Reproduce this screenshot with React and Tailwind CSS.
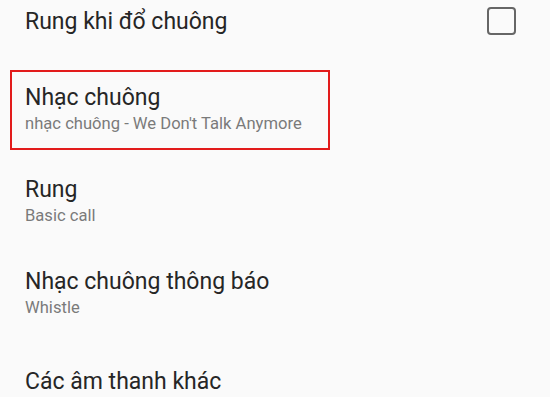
import React from "react";

const rows = [
  { title: "Nhạc chuông", sub: "nhạc chuông - We Don't Talk Anymore", marked: true },
  { title: "Rung", sub: "Basic call" },
  { title: "Nhạc chuông thông báo", sub: "Whistle" },
];

const Row = ({ title, sub, marked }) => (
  <div
    className={`ml-[10px] w-[320px] border-2 pl-[13px] pt-[11px] pb-[13px] ${
      marked ? "border-[#e21b1b]" : "border-transparent"
    }`}
  >
    <div className="text-[23px] leading-[30px] text-[#262626]">{title}</div>
    <div className="text-[16.6px] leading-[22px] text-[#7a7a7a]">{sub}</div>
  </div>
);

export default function App() {
  return (
    <div
      className="h-[397px] w-[550px] overflow-hidden bg-[#fafafa]"
      style={{ fontFamily: "Roboto, 'Noto Sans', sans-serif" }}
    >
      <div className="flex items-center justify-between pl-[25px] pr-[34px] pt-[5px]">
        <div className="pt-[2px] text-[23px] leading-[30px] text-[#262626]">Rung khi đổ chuông</div>
        <div className="h-[28px] w-[29px] rounded-[4px] border-[2.5px] border-[#666666]" />
      </div>

      <div className="mt-[33px] flex flex-col gap-[12px]">
        {rows.map((r) => (
          <Row key={r.title} {...r} />
        ))}
      </div>

      <div className="pl-[25px] pt-[33px] text-[23px] leading-[30px] text-[#262626]">
        Các âm thanh khác
      </div>
    </div>
  );
}
